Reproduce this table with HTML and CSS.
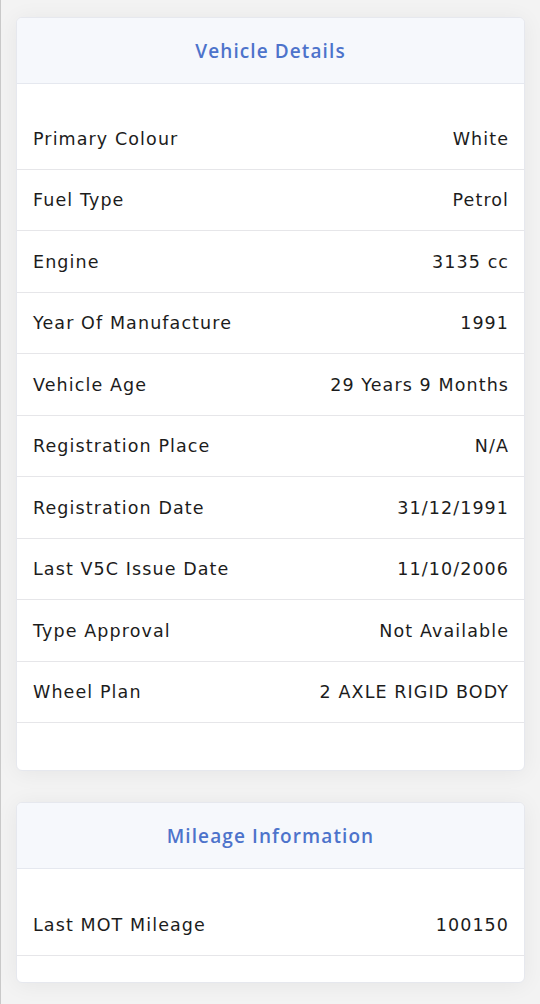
FILE: index.html
```html
<!DOCTYPE html>
<html lang="en">
<head>
<meta charset="utf-8">
<title>Vehicle Details</title>
<link rel="stylesheet" href="styles.css">
</head>
<body>
<main class="page">
  <section class="card">
    <header class="card-head"><h2 class="card-title">Vehicle Details</h2></header>
    <div class="card-body card-body-lg">
      <div class="row"><span class="label">Primary Colour</span><span class="value">White</span></div>
      <div class="row"><span class="label">Fuel Type</span><span class="value">Petrol</span></div>
      <div class="row"><span class="label">Engine</span><span class="value">3135 cc</span></div>
      <div class="row"><span class="label">Year Of Manufacture</span><span class="value">1991</span></div>
      <div class="row"><span class="label">Vehicle Age</span><span class="value">29 Years 9 Months</span></div>
      <div class="row"><span class="label">Registration Place</span><span class="value">N/A</span></div>
      <div class="row"><span class="label">Registration Date</span><span class="value">31/12/1991</span></div>
      <div class="row"><span class="label">Last V5C Issue Date</span><span class="value">11/10/2006</span></div>
      <div class="row"><span class="label">Type Approval</span><span class="value">Not Available</span></div>
      <div class="row"><span class="label">Wheel Plan</span><span class="value">2 AXLE RIGID BODY</span></div>
    </div>
  </section>
  <section class="card">
    <header class="card-head"><h2 class="card-title">Mileage Information</h2></header>
    <div class="card-body card-body-sm">
      <div class="row"><span class="label">Last MOT Mileage</span><span class="value">100150</span></div>
    </div>
  </section>
</main>
</body>
</html>
```
FILE: styles.css
```css
html, body {
  margin: 0;
  padding: 0;
}
body {
  background: #f3f3f3;
  border-left: 1px solid #c9c9c9;
  font-family: "DejaVu Sans", "Open Sans", sans-serif;
  color: #1c1c1c;
  min-height: 1004px;
  box-sizing: border-box;
}
.page {
  padding: 17px 15px 20px 15px;
  display: flex;
  flex-direction: column;
  gap: 31px;
}
.card {
  background: #fff;
  border: 1px solid #e6e8ee;
  border-radius: 6px;
  box-shadow: 0 2px 22px rgba(0, 0, 0, 0.06);
  overflow: hidden;
}
.card-head {
  background: #f6f8fc;
  border-bottom: 1px solid #e5e8ef;
  height: 65px;
  display: flex;
  align-items: center;
  justify-content: center;
}
.card-title {
  margin: 0;
  font-family: "Open Sans", "DejaVu Sans", sans-serif;
  font-size: 19px;
  font-weight: 600;
  color: #4d73cb;
  letter-spacing: 1.1px;
}
.card-body-lg {
  padding: 24px 0 47px;
}
.card-body-sm {
  padding: 25px 0 26px;
}
.row {
  display: flex;
  justify-content: space-between;
  align-items: center;
  height: 60.5px;
  padding: 0 16px;
  border-bottom: 1px solid #e6e6e9;
  font-size: 17.5px;
  letter-spacing: 1.1px;
  line-height: 1;
  padding-top: 2px;
  box-sizing: border-box;
  height: 61.5px;
}
.value {
  text-align: right;
  margin-right: -1.1px;
}
```
